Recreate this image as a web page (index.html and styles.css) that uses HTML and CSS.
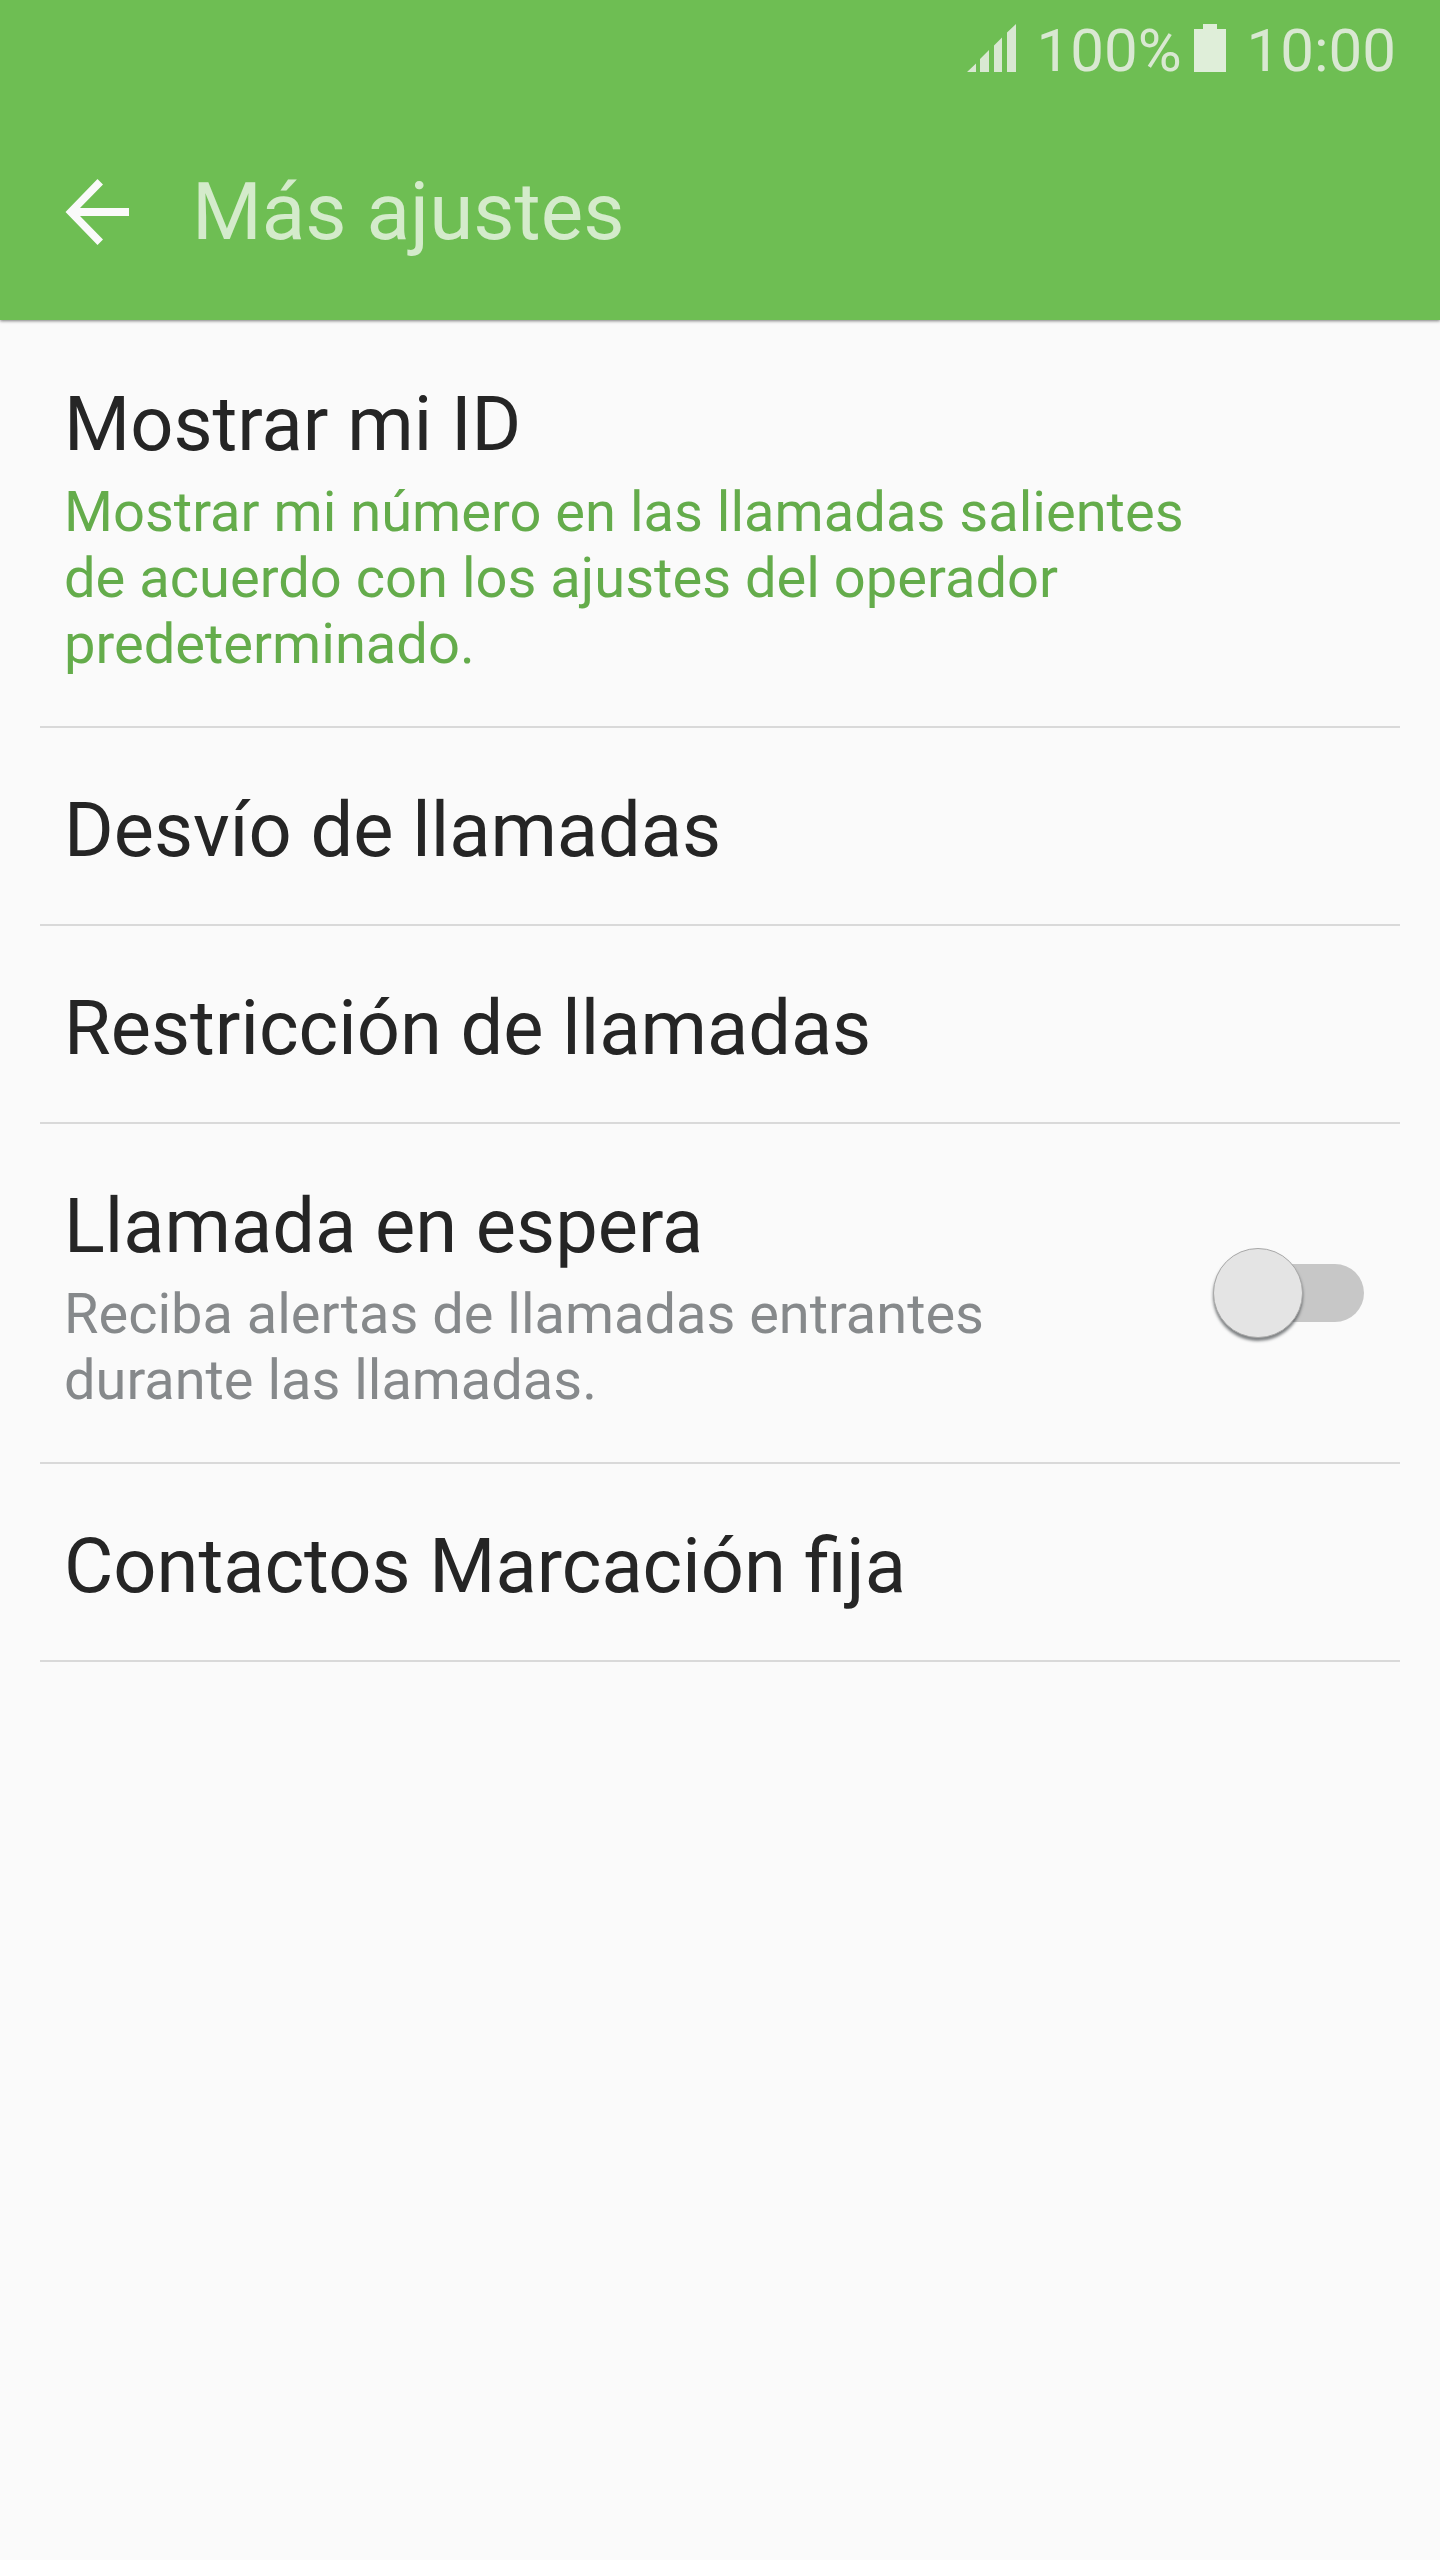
FILE: index.html
```html
<!DOCTYPE html>
<html lang="es">
<head>
<meta charset="utf-8">
<title>Más ajustes</title>
<link rel="stylesheet" href="styles.css">
</head>
<body>
<header class="header">
  <div class="status">
    <svg class="signal" width="49" height="48" viewBox="0 0 49 48"><path d="M0 48L9 39.500V48zM13 48V35L22 26V48zM27 48V21.500L35 13.500V48zM40 48V8.500L49 0V48z"/></svg>
    <span class="percent">100%</span>
    <svg class="battery" width="32" height="48" viewBox="0 0 32 48"><path d="M9 0H23V5H32V48H0V5H9z"/></svg>
    <span class="clock">10:00</span>
  </div>
  <div class="toolbar">
    <svg class="back" width="65" height="66" viewBox="0 0 65 66"><path d="M33.500 0L39 5.500L16 29H65V37H16L39 60.500L33.500 66L1.500 33z"/></svg>
    <h1 class="title">Más ajustes</h1>
  </div>
</header>
<main class="list">
  <section class="item">
    <div><h2 class="name">Mostrar mi ID</h2>
    <p class="desc accent">Mostrar mi número en las llamadas salientes<br>de acuerdo con los ajustes del operador<br>predeterminado.</p></div>
  </section>
  <section class="item"><h2 class="name">Desvío de llamadas</h2></section>
  <section class="item"><h2 class="name">Restricción de llamadas</h2></section>
  <section class="item">
    <div><h2 class="name">Llamada en espera</h2>
    <p class="desc">Reciba alertas de llamadas entrantes<br>durante las llamadas.</p></div>
    <span class="switch"><span class="track"></span><span class="thumb"></span></span>
  </section>
  <section class="item"><h2 class="name">Contactos Marcación fija</h2></section>
</main>
</body>
</html>
```
FILE: styles.css
```css
* { box-sizing: border-box; }
body { margin: 0; height: 2560px; background: #fafafa; font-family: Roboto, sans-serif; overflow: hidden; }
h1, h2, p { margin: 0; font-weight: 400; }
.header { height: 320px; background: #6ebe53; box-shadow: 0 1px 3px rgba(0, 0, 0, 0.5); }
.status { height: 96px; display: flex; justify-content: flex-end; align-items: center; padding-right: 44px; font-size: 60px; line-height: 70px; color: #d9e8d2; }
.signal { fill: #d9e8d2; }
.battery { fill: #dfeed9; margin: 0 21px 0 12px; }
.percent, .clock { margin-top: 5px; }
.percent { margin-left: 20px; }
.toolbar { height: 224px; display: flex; align-items: center; padding: 8px 0 0 64px; }
.back { fill: #fafafa; }
.title { margin-left: 63px; font-size: 80px; line-height: 94px; color: #d4ebcb; }
.list { padding: 2px 40px 0; }
.item { display: flex; justify-content: space-between; padding: 57px 24px 47px; border-bottom: 2px solid #d9d9d9; }
.name { font-size: 75.8px; line-height: 92px; color: #252525; }
.desc { font-size: 55.95px; line-height: 66px; color: #86898b; padding: 8px 0 2px; }
.accent { font-size: 56.07px; color: #64ac4b; }
.switch { position: relative; width: 164px; height: 100px; align-self: center; }
.track { position: absolute; left: 40px; right: 12px; top: 16px; height: 58px; border-radius: 29px; background: #c7c7c7; }
.thumb { position: absolute; left: 1px; top: 0; width: 90px; height: 90px; border-radius: 50%; background: #e4e4e4; border: 1px solid #a8a8a8; box-shadow: 0 3px 3px rgba(60, 64, 68, 0.65); }
```
